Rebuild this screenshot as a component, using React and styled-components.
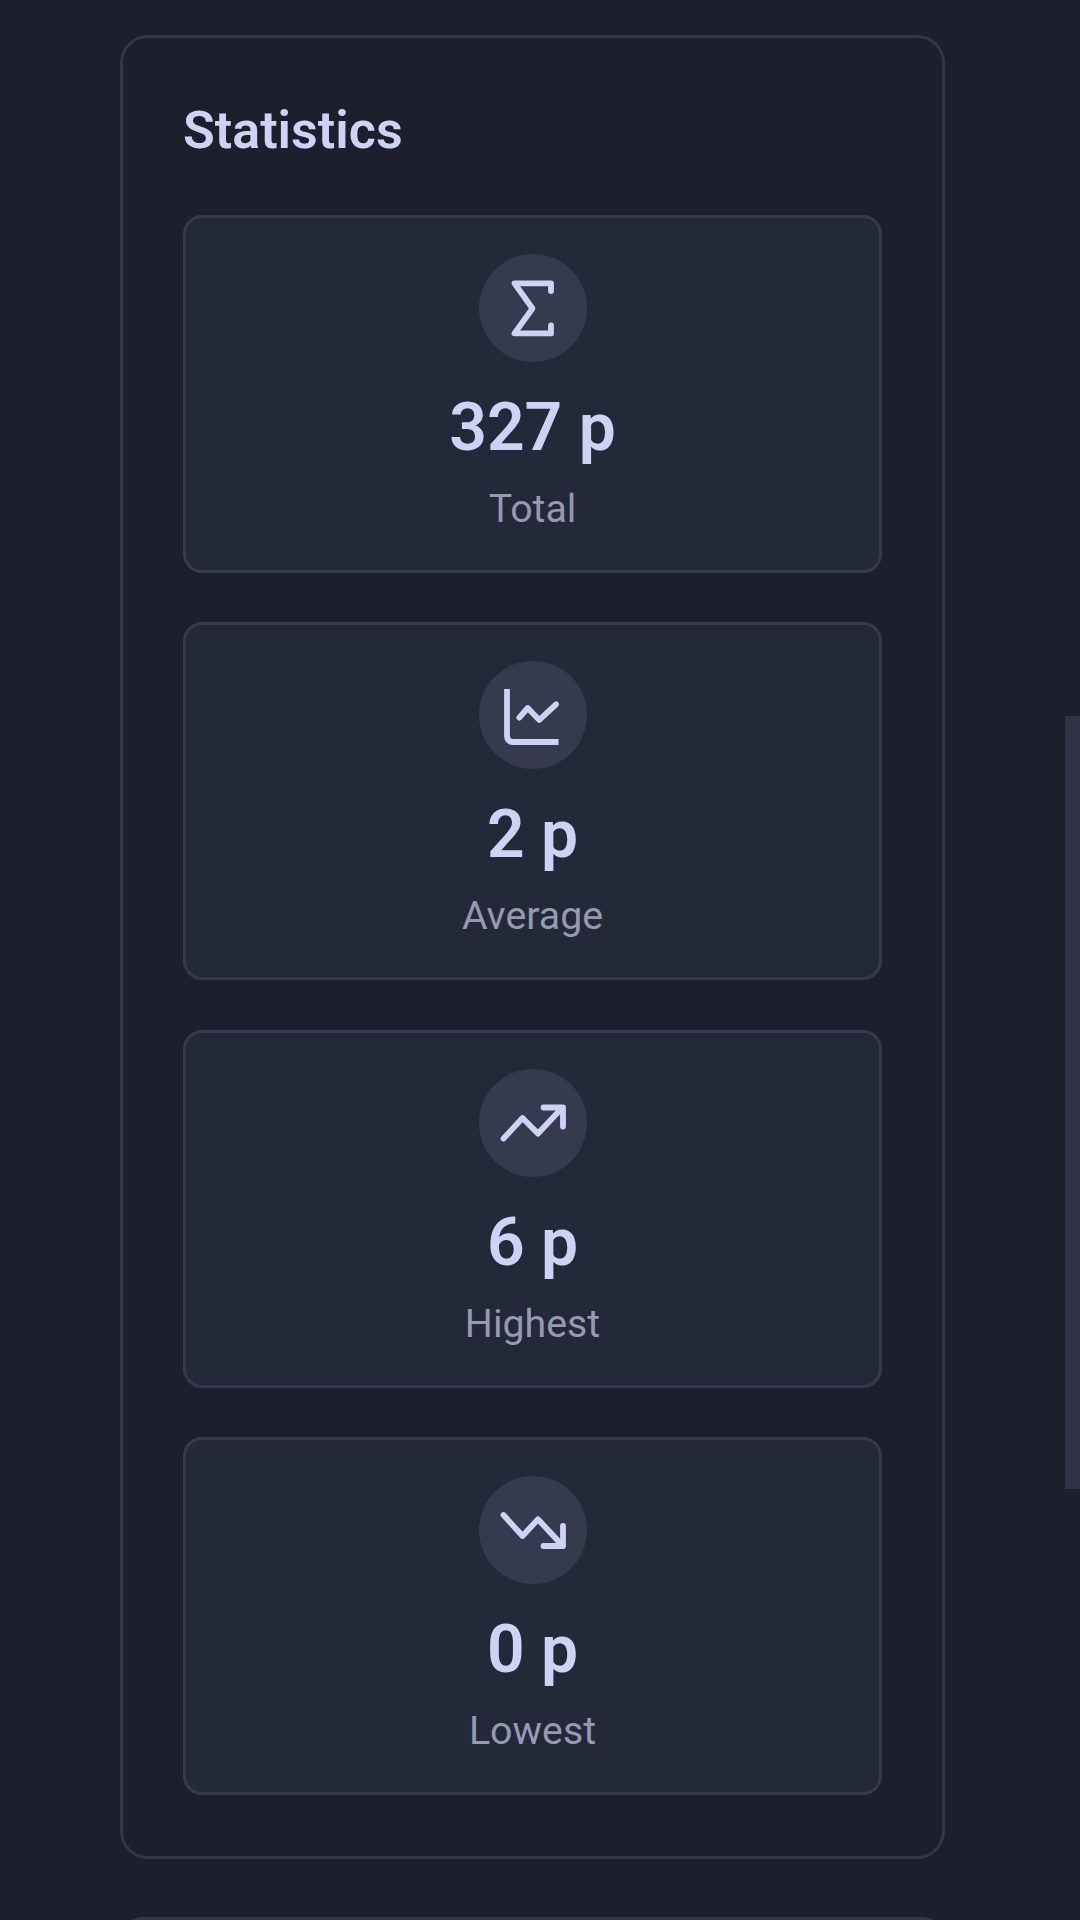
import styled, { createGlobalStyle } from 'styled-components';

const GlobalStyle = createGlobalStyle`
  html, body {
    margin: 0;
    padding: 0;
    background: #1d1f2d;
  }
  body {
    font-family: Roboto, "Noto Sans", sans-serif;
  }
`

const Page = styled.div`
  position: relative;
  height: 1920px;
  overflow: hidden;
  padding: 35px 135px 0 120px;
  box-sizing: border-box;
  background: #1d1f2d;
`

const Panel = styled.section`
  box-sizing: border-box;
  height: 1824px;
  padding: 66px 60px 0;
  margin-bottom: 58px;
  background: #1d1f2d;
  border: 3px solid #353746;
  border-radius: 28px;
`

const NextPanel = styled.div`
  height: 40px;
  border: 3px solid #353746;
  border-radius: 28px;
`

const Title = styled.h2`
  margin: 0 0 56.5px;
  height: 54px;
  font-size: 52px;
  line-height: 54px;
  font-weight: 600;
  color: #cdd3f5;
`

const CardList = styled.div`
  display: flex;
  flex-direction: column;
  gap: 49.5px;
`

const Card = styled.div`
  box-sizing: border-box;
  height: 358px;
  padding-top: 36px;
  display: flex;
  flex-direction: column;
  align-items: center;
  background: #242939;
  border: 3px solid #363a4c;
  border-radius: 19px;
`

const IconCircle = styled.div`
  width: 108px;
  height: 108px;
  border-radius: 50%;
  background: #363a4f;
  flex-shrink: 0;
`

const IconSvg = styled.svg`
  display: block;
  width: 108px;
  height: 108px;
  fill: none;
  stroke: #cdd3f5;
  stroke-width: 5.8;
  stroke-linecap: round;
  stroke-linejoin: round;
`

const Value = styled.div`
  margin-top: 27px;
  font-size: 66px;
  line-height: 78px;
  font-weight: 600;
  color: #cdd3f5;
`

const Label = styled.div`
  margin-top: 17px;
  font-size: 39.3px;
  line-height: 50px;
  color: #9599b2;
`

const ScrollThumb = styled.div`
  position: absolute;
  top: 716px;
  right: 0;
  width: 15px;
  height: 773px;
  background: #2f3345;
`

const SigmaIcon = () => (
  <IconSvg viewBox="0 0 108 108">
    <path d="M72 37V29.4H35.5L53.5 54.5L35.5 79.4H72V71.5" />
  </IconSvg>
)

const ChartIcon = () => (
  <IconSvg viewBox="0 0 108 108">
    <path d="M28 28V74.5Q28 81 34.5 81H79.5" strokeLinecap="butt" />
    <path d="M40.3 56.6L48.7 47L60.3 59L77 43.3" />
  </IconSvg>
)

const TrendUpIcon = () => (
  <IconSvg viewBox="0 0 108 108">
    <path d="M24.5 69.6L43.5 49L59 64.6L83 39" />
    <path d="M64.5 38.5H84V57.5" />
  </IconSvg>
)

const TrendDownIcon = () => (
  <IconSvg viewBox="0 0 108 108">
    <path d="M24.5 39L43.5 60L59 43.3L83 69" />
    <path d="M64.5 70H84V50" />
  </IconSvg>
)

const stats = [
  { icon: <SigmaIcon />, value: '327 p', label: 'Total' },
  { icon: <ChartIcon />, value: '2 p', label: 'Average' },
  { icon: <TrendUpIcon />, value: '6 p', label: 'Highest' },
  { icon: <TrendDownIcon />, value: '0 p', label: 'Lowest' },
]

export default function App() {
  return (
    <Page>
      <GlobalStyle />
      <Panel>
        <Title>Statistics</Title>
        <CardList>
          {stats.map(stat => (
            <Card key={stat.label}>
              <IconCircle>{stat.icon}</IconCircle>
              <Value>{stat.value}</Value>
              <Label>{stat.label}</Label>
            </Card>
          ))}
        </CardList>
      </Panel>
      <NextPanel />
      <ScrollThumb />
    </Page>
  )
}
